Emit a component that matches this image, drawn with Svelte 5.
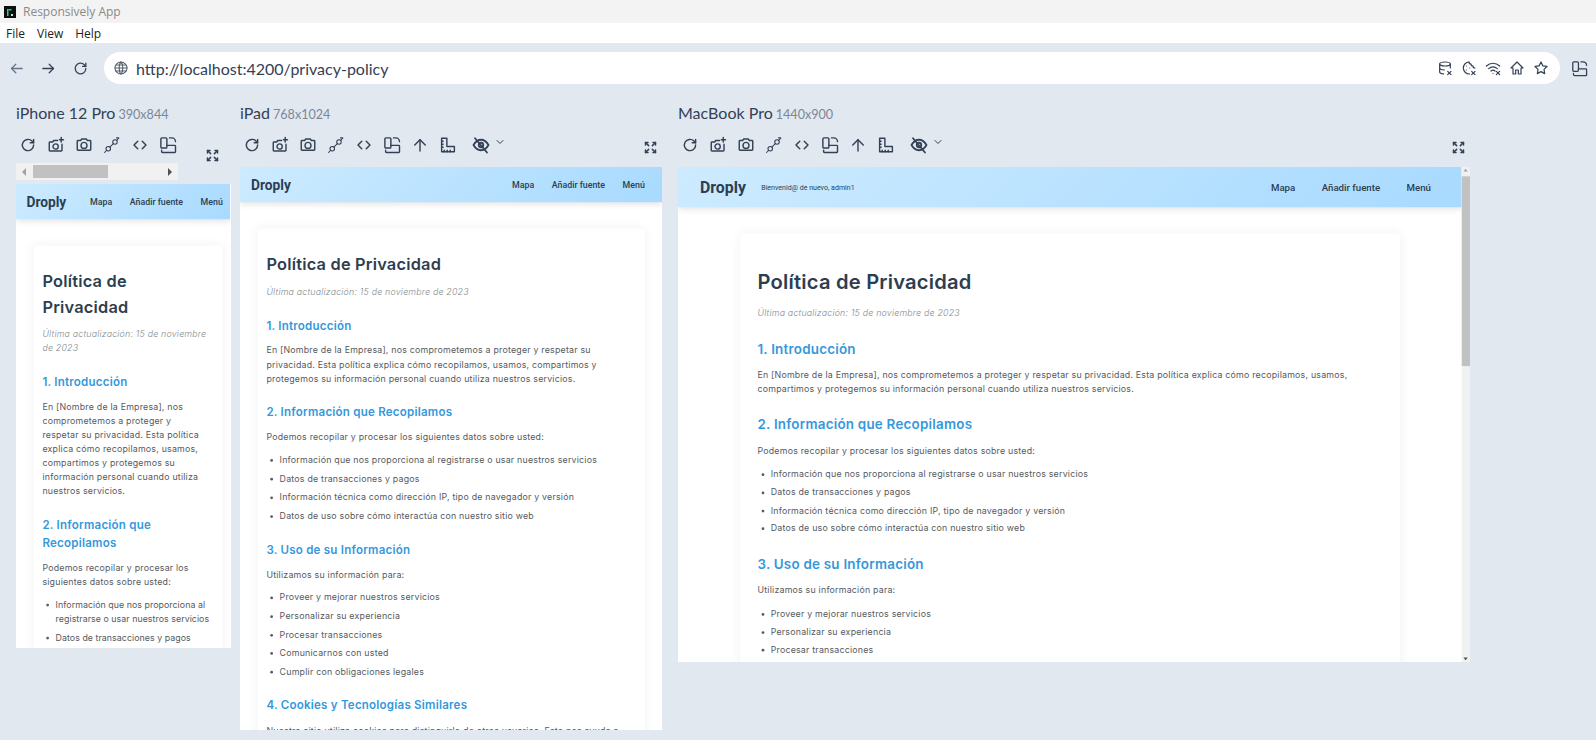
<script lang="ts">
	const icons: Record<string, string[]> = {
		back: ['M20 12H5', 'M11 6l-6 6 6 6'],
		forward: ['M4 12h15', 'M13 6l6 6-6 6'],
		refresh: ['M19.5 12a7.5 7.5 0 1 1-2.2-5.3L19.5 9', 'M19.5 4.5V9H15'],
		globe: ['M12 3a9 9 0 1 0 0 18 9 9 0 0 0 0-18z', 'M3 12h18', 'M12 3c3.5 3 3.5 15 0 18-3.5-3-3.5-15 0-18z', 'M4.5 7.5h15', 'M4.5 16.5h15'],
		camPlus: ['M14 6H9L7.5 8H4a1 1 0 0 0-1 1v10a1 1 0 0 0 1 1h15a1 1 0 0 0 1-1v-8', 'M11.5 10.5a3.5 3.5 0 1 0 0 7 3.5 3.5 0 0 0 0-7z', 'M19 2v6', 'M16.5 5H22'],
		camera: ['M4 6h3.5L9 4h6l1.5 2H20a1 1 0 0 1 1 1v11a1 1 0 0 1-1 1H4a1 1 0 0 1-1-1V7a1 1 0 0 1 1-1z', 'M12 8.5a4 4 0 1 0 0 8 4 4 0 0 0 0-8z'],
		plug: ['M7 14a3 3 0 1 0 0 6 3 3 0 0 0 0-6z', 'M16 5a3 3 0 1 0 0 6 3 3 0 0 0 0-6z', 'M2 22l3-3', 'M9.2 14.8l4.6-4.6', 'M18.2 5.8L21 3', 'M18 2.5h3'],
		code: ['M9 7l-5 5 5 5', 'M15 7l5 5-5 5'],
		rotate: ['M4 2.5h5A1.5 1.5 0 0 1 10.5 4v10.5A1.5 1.5 0 0 1 9 16H4a1.5 1.5 0 0 1-1.5-1.5V4A1.5 1.5 0 0 1 4 2.5z', 'M14 2.5h3a5 5 0 0 1 5 5', 'M10.5 12.5H21a1 1 0 0 1 1 1V21a1 1 0 0 1-1 1H5a1.5 1.5 0 0 1-1.5-1.5V19'],
		up: ['M12 20V5', 'M5 12l7-7 7 7'],
		ruler: ['M3.5 3h7v11h10v7h-17z', 'M7 21v-2', 'M11 21v-2', 'M15 21v-2', 'M3.5 7h2', 'M3.5 11h2', 'M3.5 15h2'],
		eyeOff: ['M2 12s4-7 10-7 10 7 10 7-4 7-10 7-10-7-10-7z', 'M12 9a3 3 0 1 0 0 6 3 3 0 0 0 0-6z', 'M4 3l16 19'],
		chevron: ['M6 9l6 6 6-6'],
		expand: ['M9 9L4 4', 'M4 8V4h4', 'M15 9l5-5', 'M16 4h4v4', 'M9 15l-5 5', 'M4 16v4h4', 'M15 15l5 5', 'M20 16v4h-4'],
		dbX: ['M4 6c0-1.7 3.6-3 8-3s8 1.3 8 3-3.6 3-8 3-8-1.3-8-3z', 'M4 6v12c0 1.4 2.5 2.6 6 2.9', 'M20 6v6', 'M4 12c0 1.5 3 2.8 7 3', 'M16 17l5 5', 'M21 17l-5 5'],
		cookieX: ['M12 3a9 9 0 1 0 1 18', 'M12 3a3 3 0 0 0 3 3 3 3 0 0 0 3 3 3 3 0 0 0 3 3', 'M8.5 9h.01', 'M8 15h.01', 'M13 12h.01', 'M16 17l5 5', 'M21 17l-5 5'],
		wifiX: ['M2 9c6-5.5 14-5.5 20 0', 'M5.5 13c4-3.5 9-3.5 13 0', 'M9 16.5c1.8-1.5 4.2-1.5 6 0', 'M12 20h.01', 'M17 17l5 5', 'M22 17l-5 5'],
		home: ['M3 12l9-9 9 9h-3v9h-4v-6h-4v6H6v-9z'],
		star: ['M12 3l2.8 5.8 6.2.9-4.5 4.4 1 6.3-5.5-3-5.5 3 1-6.3L3 9.7l6.2-.9z']
	}

	const scale = 0.55
	const baseTools = ['refresh', 'camPlus', 'camera', 'plug', 'code', 'rotate']
	const devices = [
		{ name: 'iPhone 12 Pro', w: 390, h: 844, size: 'sm', tools: baseTools, more: false },
		{ name: 'iPad', w: 768, h: 1024, size: 'md', tools: [...baseTools, 'up', 'ruler'], more: true },
		{ name: 'MacBook Pro', w: 1440, h: 900, size: 'lg', tools: [...baseTools, 'up', 'ruler'], more: true }
	]

	const sections = [
		{
			title: '1. Introducción',
			text: 'En [Nombre de la Empresa], nos comprometemos a proteger y respetar su privacidad. Esta política explica cómo recopilamos, usamos, compartimos y protegemos su información personal cuando utiliza nuestros servicios.',
			items: []
		},
		{
			title: '2. Información que Recopilamos',
			text: 'Podemos recopilar y procesar los siguientes datos sobre usted:',
			items: [
				'Información que nos proporciona al registrarse o usar nuestros servicios',
				'Datos de transacciones y pagos',
				'Información técnica como dirección IP, tipo de navegador y versión',
				'Datos de uso sobre cómo interactúa con nuestro sitio web'
			]
		},
		{
			title: '3. Uso de su Información',
			text: 'Utilizamos su información para:',
			items: [
				'Proveer y mejorar nuestros servicios',
				'Personalizar su experiencia',
				'Procesar transacciones',
				'Comunicarnos con usted',
				'Cumplir con obligaciones legales'
			]
		},
		{
			title: '4. Cookies y Tecnologías Similares',
			text: 'Nuestro sitio utiliza cookies para distinguirlo de otros usuarios. Esto nos ayuda a',
			items: []
		}
	]
</script>

{#snippet icon(name: string)}
	<svg class="icon {name}" viewBox="0 0 24 24" aria-hidden="true">
		{#each icons[name] as d}
			<path {d} />
		{/each}
	</svg>
{/snippet}

<div class="app">
	<div class="titlebar">
		<svg class="logo" viewBox="0 0 12 12" aria-hidden="true">
			<rect width="12" height="12" fill="#0b0f0e" />
			<rect x="3" y="3" width="1.5" height="7" fill="#1fd18a" />
			<rect x="4.5" y="3" width="3" height="1.5" fill="#1fd18a" />
			<rect x="7" y="8" width="2" height="2" fill="#d8d8d8" />
		</svg>
		<span>Responsively App</span>
	</div>
	<div class="menubar">
		<span>File</span>
		<span>View</span>
		<span>Help</span>
	</div>

	<div class="toolbar">
		<button class="nav prev">{@render icon('back')}</button>
		<button class="nav">{@render icon('forward')}</button>
		<button class="nav">{@render icon('refresh')}</button>
		<div class="address">
			{@render icon('globe')}
			<span class="url">http://localhost:4200/privacy-policy</span>
			<div class="address-tools">
				{@render icon('dbX')}
				{@render icon('cookieX')}
				{@render icon('wifiX')}
				{@render icon('home')}
				{@render icon('star')}
			</div>
		</div>
		<button class="nav layout">{@render icon('rotate')}</button>
	</div>

	<div class="devices">
		{#each devices as d}
			<section class="device">
				<div class="label">
					<span class="name">{d.name}</span>
					<span class="dims">{d.w}x{d.h}</span>
				</div>
				<div class="controls">
					<div class="controls-left">
						<div class="tools">
							{#each d.tools as t}
								<button class="tool">{@render icon(t)}</button>
							{/each}
							{#if d.more}
								<button class="tool eye">{@render icon('eyeOff')}</button>
								<button class="caret">{@render icon('chevron')}</button>
							{/if}
						</div>
						{#if d.size === 'sm'}
							<div class="hscroll">
								<span class="arrow-left"></span>
								<span class="hthumb"></span>
								<span class="arrow-right"></span>
							</div>
						{/if}
					</div>
					<button class="tool expand-btn">{@render icon('expand')}</button>
				</div>
				<div class="viewport" style="width: {d.w * scale}px; height: {d.h * scale}px">
					<div class="frame {d.size}" style="width: {d.w}px; height: {d.h}px; transform: scale({scale})">
						<div class="page">
							<nav class="navbar">
								<span class="brand">Droply</span>
								{#if d.size === 'lg'}
									<span class="welcome">Bienvenid@ de nuevo, admin1</span>
								{/if}
								<div class="links">
									<span>Mapa</span>
									<span>Añadir fuente</span>
									<span>Menú</span>
								</div>
							</nav>
							<article class="card">
								<h1>Política de Privacidad</h1>
								<p class="updated">Última actualización: 15 de noviembre de 2023</p>
								{#each sections as s}
									<h2>{s.title}</h2>
									<p>{s.text}</p>
									{#if s.items.length}
										<ul>
											{#each s.items as item}
												<li>{item}</li>
											{/each}
										</ul>
									{/if}
								{/each}
							</article>
						</div>
						{#if d.size === 'lg'}
							<div class="vscroll">
								<span class="arrow-up"></span>
								<span class="vthumb"></span>
								<span class="arrow-down"></span>
							</div>
						{/if}
					</div>
				</div>
			</section>
		{/each}
	</div>
</div>

<style>
	:global(body) {
		margin: 0;
		background: #e2e8f0;
	}

	.app {
		height: 740px;
		overflow: hidden;
		background: #e2e8f0;
		font-family: Lato, sans-serif;
		color: #334155;
	}

	button {
		border: 0;
		background: none;
		padding: 0;
		display: flex;
		align-items: center;
		justify-content: center;
		color: inherit;
	}

	.icon {
		width: 18px;
		height: 18px;
		fill: none;
		stroke: currentColor;
		stroke-width: 2;
		stroke-linecap: round;
		stroke-linejoin: round;
	}

	.titlebar {
		height: 23px;
		display: flex;
		align-items: center;
		gap: 7px;
		padding-left: 4px;
		background: #f3f3f3;
		font: 12px 'Open Sans', sans-serif;
		color: #8a8a8a;
	}

	.logo {
		width: 12px;
		height: 12px;
	}

	.menubar {
		height: 20px;
		display: flex;
		align-items: center;
		gap: 12px;
		padding-left: 6px;
		background: #fff;
		font: 12px 'Open Sans', sans-serif;
		color: #222;
	}

	.toolbar {
		display: flex;
		align-items: center;
		height: 32px;
		margin-top: 9px;
		padding-left: 0;
	}

	.nav {
		width: 32px;
		height: 32px;
	}

	.nav .icon {
		width: 17px;
		height: 17px;
		stroke-width: 1.8;
	}

	.prev {
		color: #64748b;
	}

	.address {
		width: 1456px;
		height: 32px;
		margin-left: 8px;
		box-sizing: border-box;
		padding: 0 11px 0 9px;
		display: flex;
		align-items: center;
		background: #fff;
		border-radius: 16px;
	}

	.address .globe {
		width: 16px;
		height: 16px;
		color: #55606e;
		stroke-width: 1.6;
	}

	.url {
		margin-left: 7px;
		font-size: 16px;
		color: #334155;
	}

	.address-tools {
		margin-left: auto;
		display: flex;
		align-items: center;
		gap: 8px;
	}

	.address-tools .icon {
		width: 16px;
		height: 16px;
		stroke-width: 1.8;
	}

	.layout {
		margin-left: 3px;
	}

	.devices {
		display: grid;
		grid-template-columns: 224px 438px 792px;
		margin-top: 19px;
		padding-left: 16px;
		align-items: start;
	}

	.label {
		height: 20px;
		line-height: 20px;
		white-space: nowrap;
		display: flex;
		align-items: baseline;
		gap: 3px;
	}

	.name {
		font-size: 16px;
	}

	.dims {
		font-size: 12.6px;
		color: #7c8796;
	}

	.controls {
		display: flex;
		align-items: center;
		justify-content: space-between;
		margin: 8px 0 4px -2px;
	}

	.tools {
		display: flex;
		align-items: center;
		margin-bottom: 4px;
	}

	.tool {
		width: 28px;
		height: 28px;
	}

	.tool .icon {
		stroke-width: 1.9;
	}

	.tool .plug {
		stroke-width: 1.4;
	}

	.eye {
		margin-left: 5px;
	}

	.eye .icon {
		stroke-width: 2.4;
	}

	.caret {
		width: 12px;
		height: 14px;
		margin: -6px 0 0 -1px;
	}

	.expand-btn .icon {
		width: 15px;
		height: 15px;
		stroke-width: 2.4;
	}

	.device:first-child .controls {
		width: 212px;
	}

	.device:nth-child(2) .controls {
		width: 426px;
	}

	.device:nth-child(3) .controls {
		width: 796px;
	}

	.hscroll {
		position: relative;
		width: 162px;
		height: 17px;
		margin-left: 2px;
		background: #f1f1f1;
		display: flex;
		align-items: center;
		justify-content: space-between;
		padding: 0 6px;
		box-sizing: border-box;
	}

	.hthumb {
		position: absolute;
		left: 17px;
		top: 2px;
		width: 75px;
		height: 13px;
		background: #c1c1c1;
	}

	.arrow-left {
		border: 4px solid transparent;
		border-left: 0;
		border-right: 4px solid #a3a3a3;
	}

	.arrow-right {
		border: 4px solid transparent;
		border-right: 0;
		border-left: 4px solid #505050;
	}

	.viewport {
		overflow: hidden;
		background: #fff;
	}

	.frame {
		transform-origin: 0 0;
		display: flex;
		overflow: hidden;
		background: #fff;
	}

	.page {
		flex: 1;
		min-width: 0;
		background: #fff;
		overflow: hidden;
		font-family: Inter, sans-serif;
		color: #555a60;
	}

	.navbar {
		display: flex;
		align-items: center;
		height: 64px;
		padding: 0 20px;
		background: linear-gradient(135deg, #cdebff, #a8daff);
		box-shadow: 0 4px 12px rgba(0, 0, 0, 0.12);
		font-family: Roboto, sans-serif;
		color: #2c3e50;
		position: relative;
	}

	.lg .navbar {
		height: 73px;
		padding: 0 40px;
	}

	.sm .navbar {
		padding-right: 2px;
		justify-content: space-between;
	}

	.brand {
		font-size: 25px;
		font-weight: 700;
	}

	.sm .brand {
		margin-left: -1px;
	}

	.lg .brand {
		font-size: 28.8px;
	}

	.welcome {
		margin-left: 28px;
		font-size: 12.8px;
	}

	.links {
		margin-left: auto;
		display: flex;
		gap: 8px;
		font-size: 16px;
		font-weight: 500;
	}

	.links span {
		padding: 0 12px;
	}

	.lg .links {
		font-size: 17.6px;
		gap: 16px;
	}

	.lg .links span {
		padding: 0 16px;
	}

	.card {
		margin: 48px 32px 0;
		padding: 16px;
		background: #fff;
		border-radius: 8px;
		box-shadow: 0 0 20px rgba(0, 0, 0, 0.06);
		font-size: 16px;
		letter-spacing: 0.4px;
		line-height: 25.5px;
	}

	.sm .card {
		margin-right: 14px;
	}

	.lg .card {
		max-width: 1200px;
		margin: 48px auto 0;
		padding: 32px;
		box-sizing: border-box;
		line-height: 24.5px;
	}

	h1 {
		margin: 26px 0 14px;
		font-size: 29.7px;
		line-height: 46px;
		font-weight: 600;
		color: #2c3e50;
	}

	.lg h1 {
		margin: 27px 0 17px;
		font-size: 36.6px;
		line-height: 56px;
	}

	h2 {
		margin: 31.4px 0 16.8px;
		font-size: 21px;
		line-height: 33px;
		font-weight: 600;
		color: #3498db;
	}

	.lg h2 {
		margin: 33px 0 16.5px;
		font-size: 24.4px;
		line-height: 38px;
	}

	p {
		margin: 0;
	}

	.sm p {
		padding-right: 15px;
	}

	.sm li {
		letter-spacing: 0.1px;
	}

	.updated {
		margin-bottom: 32px;
		font-style: italic;
		font-weight: 300;
		color: #7f8c8d;
	}

	.sm .updated {
		padding-right: 0;
	}

	.lg .updated {
		margin-bottom: 34px;
	}

	ul {
		margin: 16px 0 0;
		padding-left: 24px;
	}

	.lg ul {
		margin-top: 19px;
	}

	li {
		margin-bottom: 8.3px;
	}

	.vscroll {
		width: 15px;
		flex: none;
		position: relative;
		background: #f1f1f1;
	}

	.vthumb {
		position: absolute;
		left: 0;
		right: 0;
		top: 17px;
		height: 345px;
		background: #c1c1c1;
	}

	.arrow-up,
	.arrow-down {
		position: absolute;
		left: 3px;
		border: 4.5px solid transparent;
	}

	.arrow-up {
		top: 3px;
		border-top: 0;
		border-bottom: 5px solid #a3a3a3;
	}

	.arrow-down {
		bottom: 3px;
		border-bottom: 0;
		border-top: 5px solid #505050;
	}
</style>
